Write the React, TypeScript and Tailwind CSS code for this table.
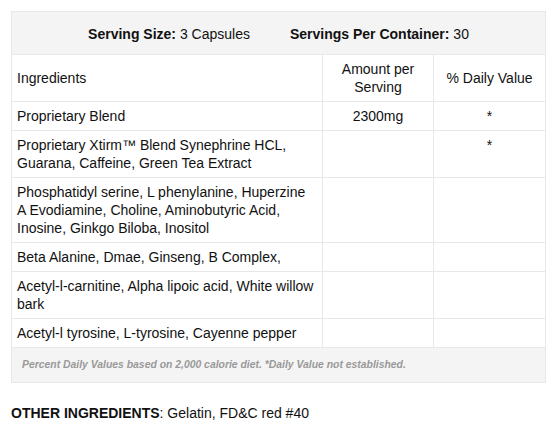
import React from "react";

const rows: { name: string[]; amount?: string; dv?: string }[] = [
  { name: ["Proprietary Blend"], amount: "2300mg", dv: "*" },
  { name: ["Proprietary Xtirm™ Blend Synephrine HCL,", "Guarana, Caffeine, Green Tea Extract"], dv: "*" },
  {
    name: [
      "Phosphatidyl serine, L phenylanine, Huperzine",
      "A Evodiamine, Choline, Aminobutyric Acid,",
      "Inosine, Ginkgo Biloba, Inositol",
    ],
  },
  { name: ["Beta Alanine, Dmae, Ginseng, B Complex,"] },
  { name: ["Acetyl-l-carnitine, Alpha lipoic acid, White willow", "bark"] },
  { name: ["Acetyl-l tyrosine, L-tyrosine, Cayenne pepper"] },
];

export default function App() {
  return (
    <div
      className="w-[554px] h-[436px] bg-white text-[#111] px-[11px] pt-[11px]"
      style={{ fontFamily: '"Liberation Sans", Arial, sans-serif' }}
    >
      <table className="w-[534px] border-collapse table-fixed text-[14px] leading-[18px]">
        <colgroup>
          <col className="w-[311px]" />
          <col className="w-[111px]" />
          <col className="w-[112px]" />
        </colgroup>
        <tbody>
          <tr className="bg-[#f4f4f4]">
            <td colSpan={3} className="border border-[#e8e8e8] h-[43px] text-center align-middle pt-[1px]">
              <span className="mr-[40px]">
                <b>Serving Size:</b> 3 Capsules
              </span>
              <span>
                <b>Servings Per Container:</b> 30
              </span>
            </td>
          </tr>
          <tr>
            <td className="border border-[#e8e8e8] px-[5px] py-[5px] align-middle">Ingredients</td>
            <td className="border border-[#e8e8e8] px-[5px] py-[5px] text-center align-middle">
              Amount per
              <br />
              Serving
            </td>
            <td className="border border-[#e8e8e8] px-[5px] py-[5px] text-center align-middle">% Daily Value</td>
          </tr>
          {rows.map((r, i) => (
            <tr key={i}>
              <td className="border border-[#e8e8e8] px-[5px] py-[5px] align-top whitespace-nowrap">
                {r.name.map((l, j) => (
                  <div key={j}>{l}</div>
                ))}
              </td>
              <td className="border border-[#e8e8e8] px-[5px] py-[5px] text-center align-top">{r.amount}</td>
              <td className="border border-[#e8e8e8] px-[5px] py-[5px] text-center align-top">{r.dv}</td>
            </tr>
          ))}
          <tr className="bg-[#f4f4f4]">
            <td
              colSpan={3}
              className="border border-[#e8e8e8] h-[35px] pl-[10px] align-middle text-[10.4px] font-bold italic text-[#999]"
            >
              Percent Daily Values based on 2,000 calorie diet. *Daily Value not established.
            </td>
          </tr>
        </tbody>
      </table>
      <p className="mt-[21px] text-[14px] leading-[18px]">
        <b>OTHER INGREDIENTS</b>: Gelatin, FD&amp;C red #40
      </p>
    </div>
  );
}
